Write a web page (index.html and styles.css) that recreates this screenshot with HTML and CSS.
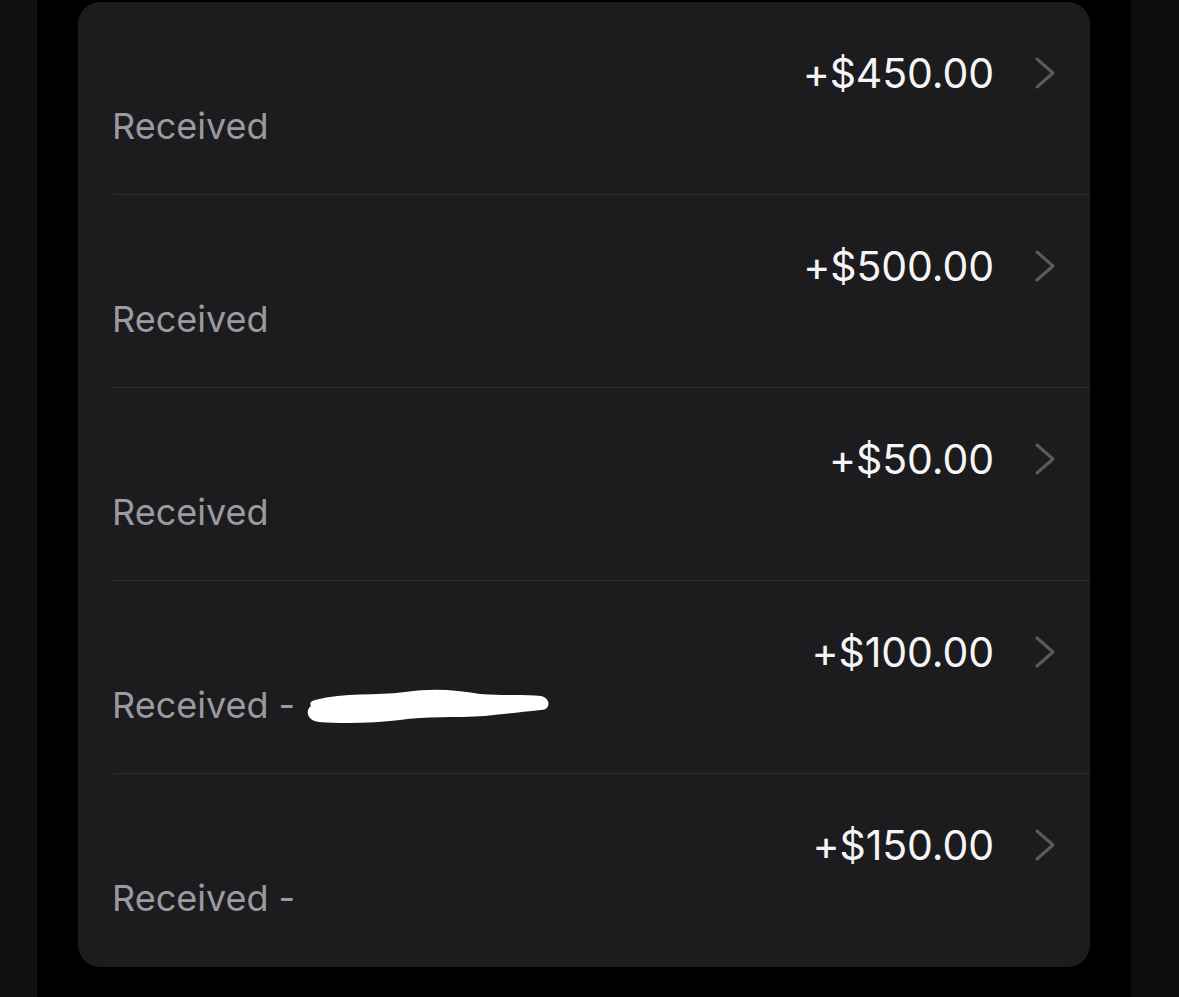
FILE: index.html
```html
<!DOCTYPE html>
<html lang="en">
<head>
    <meta charset="UTF-8">
    <title>Activity</title>
    <link rel="stylesheet" href="styles.css">
</head>
<body>
    <div class="side side-left"></div>
    <div class="card">
        <div class="row">
            <div class="top"><span class="amount">+$450.00</span><svg class="chev" width="22" height="34" viewBox="0 0 22 34"><polyline points="3,3 19,17 3,31" /></svg></div>
            <div class="label">Received</div>
        </div>
        <div class="row">
            <div class="top"><span class="amount">+$500.00</span><svg class="chev" width="22" height="34" viewBox="0 0 22 34"><polyline points="3,3 19,17 3,31" /></svg></div>
            <div class="label">Received</div>
        </div>
        <div class="row">
            <div class="top"><span class="amount">+$50.00</span><svg class="chev" width="22" height="34" viewBox="0 0 22 34"><polyline points="3,3 19,17 3,31" /></svg></div>
            <div class="label">Received</div>
        </div>
        <div class="row">
            <div class="top"><span class="amount">+$100.00</span><svg class="chev" width="22" height="34" viewBox="0 0 22 34"><polyline points="3,3 19,17 3,31" /></svg></div>
            <div class="label">Received - <svg class="scribble" width="246" height="40" viewBox="0 0 246 40"><path d="M10,14 C40,6 70,10 100,6 C130,2 150,4 175,8 C200,10 220,8 236,10 C246,12 246,24 236,24 C215,26 200,28 180,30 C150,32 120,30 95,34 C70,37 40,38 14,36 C2,35 0,24 6,20 C4,17 6,15 10,14 Z" /></svg></div>
        </div>
        <div class="row">
            <div class="top"><span class="amount">+$150.00</span><svg class="chev" width="22" height="34" viewBox="0 0 22 34"><polyline points="3,3 19,17 3,31" /></svg></div>
            <div class="label">Received - </div>
        </div>
    </div>
    <div class="side side-right"></div>
</body>
</html>
```

FILE: styles.css
```css
* {
    margin: 0;
    padding: 0;
    box-sizing: border-box;
}
html, body {
    height: 100%;
}
body {
    background: #000;
    display: flex;
    align-items: flex-start;
    font-family: Inter, 'Liberation Sans', sans-serif;
    overflow: hidden;
}
.side {
    height: 997px;
    background: #101010;
}
.side-left {
    width: 37px;
    margin-right: 41px;
}
.side-right {
    width: 48px;
    margin-left: 41px;
    background: #0d0d0d;
}
.card {
    width: 1012px;
    height: 965px;
    margin-top: 2px;
    background: #1c1c1e;
    border-radius: 22px;
    display: flex;
    flex-direction: column;
}
.row {
    height: 193.5px;
    margin-left: 35px;
    padding: 43px 34px 0 0;
    border-bottom: 1px solid #2e2e30;
}
.row:last-child {
    border-bottom: none;
}
.top {
    display: flex;
    justify-content: flex-end;
    align-items: center;
    gap: 40px;
    height: 56px;
}
.amount {
    color: #f5f5f7;
    font-size: 41px;
    letter-spacing: -0.1px;
}
.chev polyline {
    fill: none;
    stroke: #5b5b5f;
    stroke-width: 3;
    stroke-linecap: round;
    stroke-linejoin: round;
}
.label {
    margin-top: 3px;
    margin-left: -1px;
    color: #9a9aa0;
    font-size: 36px;
    line-height: 44px;
    display: flex;
    align-items: center;
    gap: 8px;
}
.scribble {
    margin-left: 2px;
    margin-top: 2px;
}
.scribble path {
    fill: #fff;
}
```
